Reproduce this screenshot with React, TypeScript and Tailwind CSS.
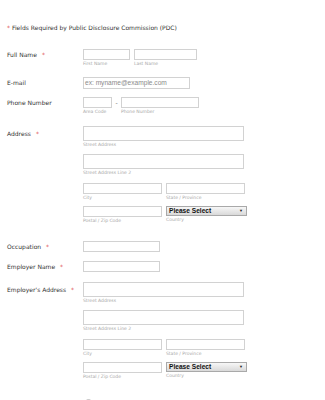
import React from "react";

const font = "font-['DejaVu_Sans','Verdana',sans-serif]";

function Star() {
  return <span className="ml-[5px] text-[#e05050]">*</span>;
}

function Sub({ children }: { children: React.ReactNode }) {
  return (
    <div className="mt-[1px] text-[4.5px] leading-[5px] text-[#a8a8a8] whitespace-nowrap">
      {children}
    </div>
  );
}

function Box({ w, h, children }: { w: string; h: string; children?: React.ReactNode }) {
  return (
    <div
      className={`${w} ${h} border border-[#d2d2d2] bg-white flex items-center px-[1px] font-['Liberation_Sans',Arial,sans-serif] text-[6.6px] text-[#8a8a8a] whitespace-nowrap overflow-hidden`}
    >
      {children}
    </div>
  );
}

function Select() {
  return (
    <div className="w-[81px] h-[10px] border border-[#a9a9a9] bg-gradient-to-b from-[#f7f7f7] to-[#d9d9d9] flex items-center justify-between pl-[2px] pr-[3px] font-['Liberation_Sans',Arial,sans-serif]">
      <span className="text-[6.6px] font-bold text-[#111] leading-none">Please Select</span>
      <span className="text-[4px] text-[#222] leading-none">▼</span>
    </div>
  );
}

function Row({
  label,
  req,
  labelTop,
  className,
  children,
}: {
  label: string;
  req?: boolean;
  labelTop: string;
  className: string;
  children: React.ReactNode;
}) {
  return (
    <div className={`flex ${className}`}>
      <div className={`w-[76px] flex-none text-[6px] leading-[7px] text-[#333] ${labelTop}`}>
        {label}
        {req && <Star />}
      </div>
      <div>{children}</div>
    </div>
  );
}

function AddressBlock() {
  return (
    <div className="flex flex-col">
      <Box w="w-[161px]" h="h-[15px]" />
      <Sub>Street Address</Sub>
      <div className="mt-[7px]">
        <Box w="w-[161px]" h="h-[15px]" />
        <Sub>Street Address Line 2</Sub>
      </div>
      <div className="mt-[8px] flex gap-[4px]">
        <div>
          <Box w="w-[79px]" h="h-[11px]" />
          <Sub>City</Sub>
        </div>
        <div>
          <Box w="w-[79px]" h="h-[11px]" />
          <Sub>State / Province</Sub>
        </div>
      </div>
      <div className="mt-[6px] flex gap-[4px]">
        <div>
          <Box w="w-[79px]" h="h-[11px]" />
          <Sub>Postal / Zip Code</Sub>
        </div>
        <div>
          <Select />
          <Sub>Country</Sub>
        </div>
      </div>
    </div>
  );
}

export default function App() {
  return (
    <div className={`w-[325px] h-[400px] overflow-hidden bg-white pl-[7px] pt-[24px] ${font}`}>
      <div className="text-[6px] leading-[7px] text-[#333] whitespace-nowrap">
        <span className="text-[#e05050]">*</span> Fields Required by Public Disclosure Commission (PDC)
      </div>

      <Row label="Full Name" req labelTop="mt-[2px]" className="mt-[18px]">
        <div className="flex gap-[4px]">
          <div>
            <Box w="w-[47px]" h="h-[11px]" />
            <Sub>First Name</Sub>
          </div>
          <div>
            <Box w="w-[63px]" h="h-[11px]" />
            <Sub>Last Name</Sub>
          </div>
        </div>
      </Row>

      <Row label="E-mail" labelTop="mt-[2px]" className="mt-[11px]">
        <Box w="w-[107px]" h="h-[12px]">ex: myname@example.com</Box>
      </Row>

      <Row label="Phone Number" labelTop="mt-[2px]" className="mt-[8px]">
        <div className="flex items-start">
          <div>
            <Box w="w-[29px]" h="h-[11px]" />
            <Sub>Area Code</Sub>
          </div>
          <div className="w-[9px] h-[11px] flex items-center justify-center text-[6px] text-[#666]">-</div>
          <div>
            <Box w="w-[78px]" h="h-[11px]" />
            <Sub>Phone Number</Sub>
          </div>
        </div>
      </Row>

      <Row label="Address" req labelTop="mt-[4px]" className="mt-[12px]">
        <AddressBlock />
      </Row>

      <Row label="Occupation" req labelTop="mt-[2px]" className="mt-[18px]">
        <Box w="w-[77px]" h="h-[11px]" />
      </Row>

      <Row label="Employer Name" req labelTop="mt-[2px]" className="mt-[9px]">
        <Box w="w-[77px]" h="h-[11px]" />
      </Row>

      <Row label="Employer's Address" req labelTop="mt-[4px]" className="mt-[10px]">
        <AddressBlock />
      </Row>

      <div className="mt-[20px] flex">
        <div className="w-[76px] flex-none text-[6px] leading-[7px] text-[#222]">Would you like to be</div>
        <div className="flex items-center gap-[4px] ml-[2px]">
          <div className="w-[7px] h-[7px] rounded-full border border-[#bbb] bg-white" />
          <span className="text-[5px] leading-[7px] text-[#666]">Yes</span>
        </div>
      </div>
    </div>
  );
}
